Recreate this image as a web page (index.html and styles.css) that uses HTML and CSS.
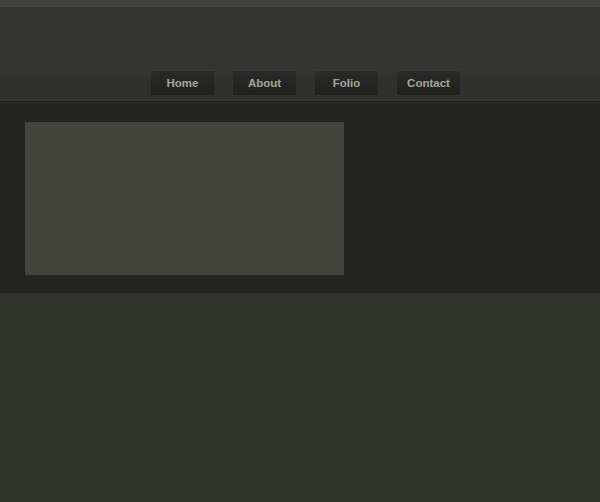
FILE: index.html
```html
<!DOCTYPE html>
<html lang="en">
<head>
    <meta charset="UTF-8">
    <meta name="viewport" content="width=device-width, initial-scale=1.0">
    <title>Portfolio</title>
    <link rel="stylesheet" href="styles.css">
</head>
<body>
    <div class="topbar"></div>
    <header>
        <nav class="menu">
            <a class="menu-item" href="#">Home</a>
            <a class="menu-item" href="#">About</a>
            <a class="menu-item" href="#">Folio</a>
            <a class="menu-item" href="#">Contact</a>
        </nav>
    </header>
    <div class="content">
        <div class="feature"></div>
    </div>
    <footer></footer>
</body>
</html>
```

FILE: styles.css
```css
:root {
    --top-color: #40403c;
    --header-color: #333430;
    --band-color: #30312d;
    --content-color: #242422;
    --box-color: #43443d;
    --footer-color: #31332d;
    --text-color: #a5a59a;
}

body, html {
    margin: 0;
    padding: 0;
    height: 100%;
    background-color: var(--footer-color);
    font-family: 'Liberation Sans', Arial, sans-serif;
}

body {
    display: flex;
    flex-direction: column;
}

.topbar {
    height: 6px;
    background-color: var(--top-color);
    border-bottom: 1px solid #45463f;
}

header {
    height: 95px;
    box-sizing: border-box;
    padding-top: 63px;
    background: linear-gradient(var(--header-color) 70px, var(--band-color) 70px);
    border-bottom: 1px solid #1d1d1b;
}

.menu {
    display: flex;
    justify-content: center;
    gap: 19px;
    padding-left: 11px;
}

.menu-item {
    width: 63px;
    height: 24px;
    line-height: 24px;
    text-align: center;
    font-size: 11.5px;
    font-weight: bold;
    color: var(--text-color);
    text-decoration: none;
    background: linear-gradient(#2a2b28, #20201e);
    border-top: 1px solid #383935;
}

.content {
    background-color: var(--content-color);
    border-top: 1px solid #2b2c29;
    padding: 19px 25px 18px;
}

.feature {
    width: 319px;
    height: 153px;
    background-color: var(--box-color);
}

footer {
    flex-grow: 1;
    border-top: 1px solid #2c2e29;
    background-color: var(--footer-color);
}
```
